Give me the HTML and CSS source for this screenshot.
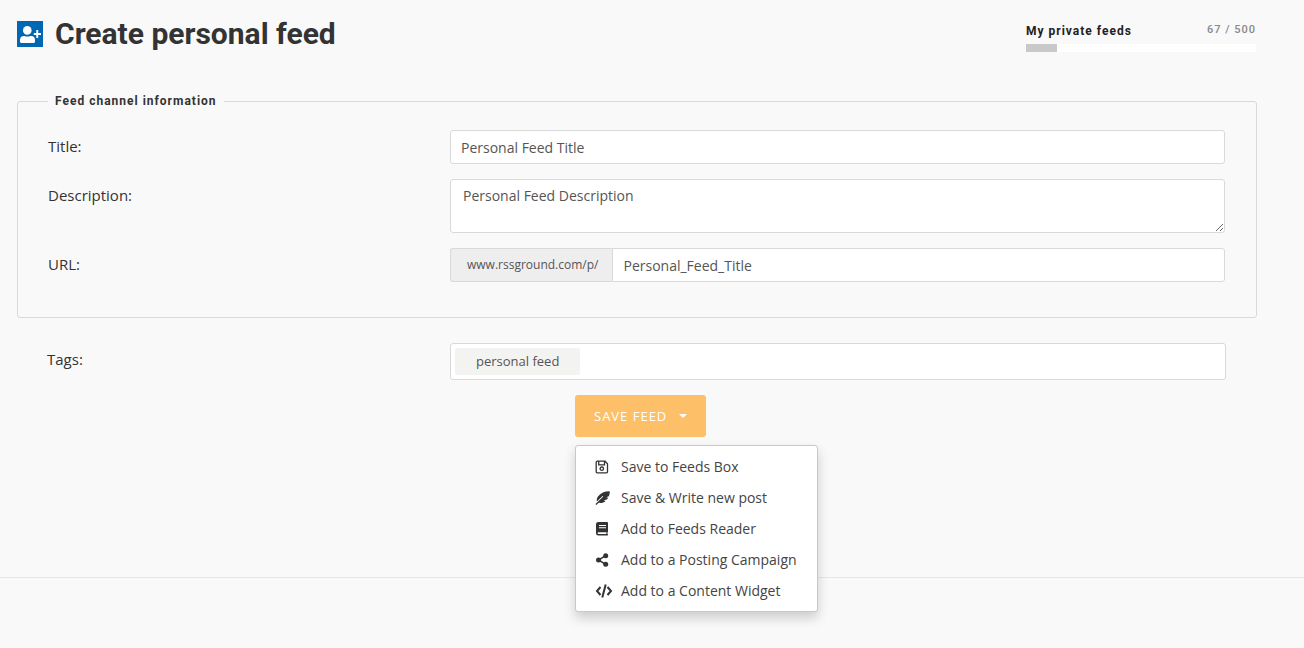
FILE: index.html
```html
<!DOCTYPE html>
<html lang="en">
  <head>
    <meta charset="UTF-8" />
    <title>Create personal feed</title>
    <meta name="viewport" content="width=device-width, initial-scale=1.0" />
    <link rel="stylesheet" href="styles.css">
  </head>
  <body>
    <main class="page">
      <header class="page-header">
        <svg class="page-icon" viewBox="0 0 26 26" aria-hidden="true">
          <rect width="26" height="26" fill="#0067b3" />
          <g fill="#fff">
            <circle cx="10.300" cy="9.400" r="4.300" />
            <path d="M3 20.500v-1.500q0-4 4-4h.5q3 1.200 6 0h.5q4 0 4 4v1.500q0 1.500-1.500 1.500h-12Q3 22 3 20.500z" />
            <path d="M19.300 9h1.900v3H24v2h-2.800v3h-1.900v-3H16.800v-2h2.500z" />
          </g>
        </svg>
        <h1>Create personal feed</h1>
        <div class="quota">
          <div class="quota-text">
            <span class="quota-name">My private feeds</span>
            <span class="quota-count">67 / 500</span>
          </div>
          <div class="quota-bar"><div class="quota-fill" style="width: 13.4%"></div></div>
        </div>
      </header>

      <form>
        <fieldset class="channel">
          <legend>Feed channel information</legend>
          <div class="row">
            <label for="title">Title:</label>
            <input class="field" type="text" id="title" value="Personal Feed Title" />
          </div>
          <div class="row">
            <label for="description">Description:</label>
            <textarea class="field" id="description">Personal Feed Description</textarea>
          </div>
          <div class="row">
            <label for="url">URL:</label>
            <div class="input-group">
              <span class="addon">www.rssground.com/p/</span>
              <input class="field" type="text" id="url" value="Personal_Feed_Title" />
            </div>
          </div>
        </fieldset>

        <div class="row tags-row">
          <label for="tags">Tags:</label>
          <div class="tags">
            <span class="tag">personal feed</span>
            <input type="text" id="tags" />
          </div>
        </div>

        <div class="dropdown">
          <button type="button" class="save">SAVE FEED <span class="caret"></span></button>
          <ul class="menu">
            <li>
              <a href="#">
                <svg viewBox="0 0 18 14" fill="none" stroke="#333" stroke-width="1.300">
                  <path d="M1.700 1.200h8.300l2.500 2.500v8.100q0 1-1 1H2.200q-1 0-1-1V2.200q0-1 1-1zM3.700 1.500v3.400h5.800V1.500" />
                  <circle cx="6.800" cy="8.700" r="1.700" />
                </svg>
                Save to Feeds Box
              </a>
            </li>
            <li>
              <a href="#">
                <svg viewBox="0 0 18 14" fill="#333">
                  <path d="M14.700.2C10 .1 5.500 2 3 5.500 1.800 7.200 1.600 9 1.900 10.500L7.600 5l.7.600L.5 13l.9 1 2.300-2.200c2.700.4 5-.2 6.900-1.900l-1.900-.6 3.200-.7 1.300-1.900-1.900-.4 2.500-1C14.600 3.500 14.900 1.500 14.700.2z" />
                </svg>
                Save &amp; Write new post
              </a>
            </li>
            <li>
              <a href="#">
                <svg viewBox="0 0 18 14" fill="#333">
                  <path fill-rule="evenodd" d="M3.200 0h9q.8 0 .8.800v8.700q0 .5-.5.700v1.900q.5.200.5.700t-.5.700H3.500Q1 13.500 1 11V2.200Q1 0 3.200 0zM4 3v1h7V3zm0 2.300v1h7v-1zM3.600 10.200q-1 0-1 .9t1 .9h7.800v-1.800z" />
                </svg>
                Add to Feeds Reader
              </a>
            </li>
            <li>
              <a href="#">
                <svg viewBox="0 0 18 14" fill="#333">
                  <circle cx="3.500" cy="7" r="2.500" />
                  <circle cx="10.700" cy="2.700" r="2.500" />
                  <circle cx="10.700" cy="11.300" r="2.500" />
                  <path d="M10.700 2.700L3.500 7l7.200 4.300" fill="none" stroke="#333" stroke-width="1.500" />
                </svg>
                Add to a Posting Campaign
              </a>
            </li>
            <li>
              <a href="#">
                <svg viewBox="0 0 18 14" fill="none" stroke="#333" stroke-width="2">
                  <path d="M5.500 3L2 7l3.500 4M12.500 3L16 7l-3.500 4M10.700.6L7.300 13.400" />
                </svg>
                Add to a Content Widget
              </a>
            </li>
          </ul>
        </div>
      </form>
    </main>
    <footer class="footer"></footer>
  </body>
</html>
```
FILE: styles.css
```css
* {
  box-sizing: border-box;
}

body {
  display: flex;
  flex-direction: column;
  min-height: 100vh;
  margin: 0;
  background: #f9f9f9;
  color: #333;
  font-family: "Open Sans", sans-serif;
  font-size: 15px;
}

.page {
  flex: 1;
  padding: 16px 47px 0 17px;
}

.page-header {
  display: flex;
  align-items: center;
  height: 36px;
}

.page-icon {
  width: 26px;
  height: 26px;
}

h1 {
  margin: 0 0 0 12px;
  font-family: Roboto, sans-serif;
  font-size: 30px;
  font-weight: 700;
  line-height: 36px;
}

.quota {
  width: 231px;
  margin-left: auto;
  padding: 6px 1px 0 0;
  font-family: Roboto, sans-serif;
}

.quota-text {
  display: flex;
  justify-content: space-between;
  padding-bottom: 4px;
  letter-spacing: 1px;
}

.quota-name {
  color: #222;
  font-size: 12px;
  font-weight: 700;
  line-height: 18px;
}

.quota-count {
  color: #888;
  font-size: 11px;
  font-weight: 500;
  line-height: 16px;
}

.quota-bar {
  height: 8px;
  background: #fff;
}

.quota-fill {
  height: 8px;
  background: #c9c9c9;
}

.channel {
  margin: 40px 0 0;
  padding: 20px 31px 35px 30px;
  border: 1px solid #d9d9d9;
  border-radius: 3px;
}

legend {
  padding: 0 7px;
  font-family: Roboto, sans-serif;
  font-size: 12px;
  font-weight: 700;
  line-height: 18px;
  letter-spacing: 1px;
}

.row {
  display: grid;
  grid-template-columns: 402px 1fr;
  align-items: start;
}

.row + .row {
  margin-top: 15px;
}

label {
  line-height: 32px;
}

.field {
  display: block;
  width: 100%;
  height: 34px;
  padding: 0 10px;
  border: 1px solid #d9d9d9;
  border-radius: 3px;
  background: #fff;
  color: #555;
  font-family: inherit;
  font-size: 14px;
}

textarea.field {
  height: 54px;
  padding: 6px 12px;
  line-height: 20px;
}

.input-group {
  display: flex;
}

.addon {
  flex: none;
  padding: 0 14px 0 16px;
  border: 1px solid #d9d9d9;
  border-right: 0;
  border-radius: 3px 0 0 3px;
  background: #eee;
  color: #555;
  font-size: 12px;
  line-height: 32px;
}

.input-group .field {
  flex: 1;
  border-radius: 0 3px 3px 0;
}

.tags-row {
  margin: 25px 31px 0 30px;
}

.tags {
  display: flex;
  height: 37px;
  margin-left: 1px;
  padding: 4px;
  border: 1px solid #d9d9d9;
  border-radius: 3px;
  background: #fff;
}

.tag {
  padding: 0 21px;
  border-radius: 2px;
  background: #f3f3f2;
  color: #555;
  font-size: 13px;
  line-height: 27px;
}

.tags input {
  flex: 1;
  border: 0;
  outline: none;
  background: transparent;
  font: inherit;
}

.dropdown {
  position: relative;
  margin: 15px 0 0 45%;
}

.save {
  display: flex;
  align-items: center;
  height: 42px;
  padding: 0 19px;
  border: 0;
  border-radius: 3px;
  background: #fdc068;
  color: #fff;
  font-family: inherit;
  font-size: 13px;
  letter-spacing: 1px;
}

.caret {
  margin-left: 12px;
  border-top: 4px solid #fff;
  border-right: 4px solid transparent;
  border-left: 4px solid transparent;
}

.menu {
  position: absolute;
  top: 50px;
  left: 0;
  width: 243px;
  margin: 0;
  padding: 5px 0;
  border: 1px solid #c8c8c8;
  border-radius: 3px;
  background: #fff;
  box-shadow: 0 6px 12px rgba(0, 0, 0, 0.18);
  list-style: none;
}

.menu a {
  display: flex;
  align-items: center;
  gap: 8px;
  padding-left: 19px;
  color: #444;
  font-size: 14px;
  line-height: 31px;
  text-decoration: none;
}

.menu svg {
  width: 18px;
  height: 14px;
}

.footer {
  height: 71px;
  border-top: 1px solid #e7e7e7;
}
```
